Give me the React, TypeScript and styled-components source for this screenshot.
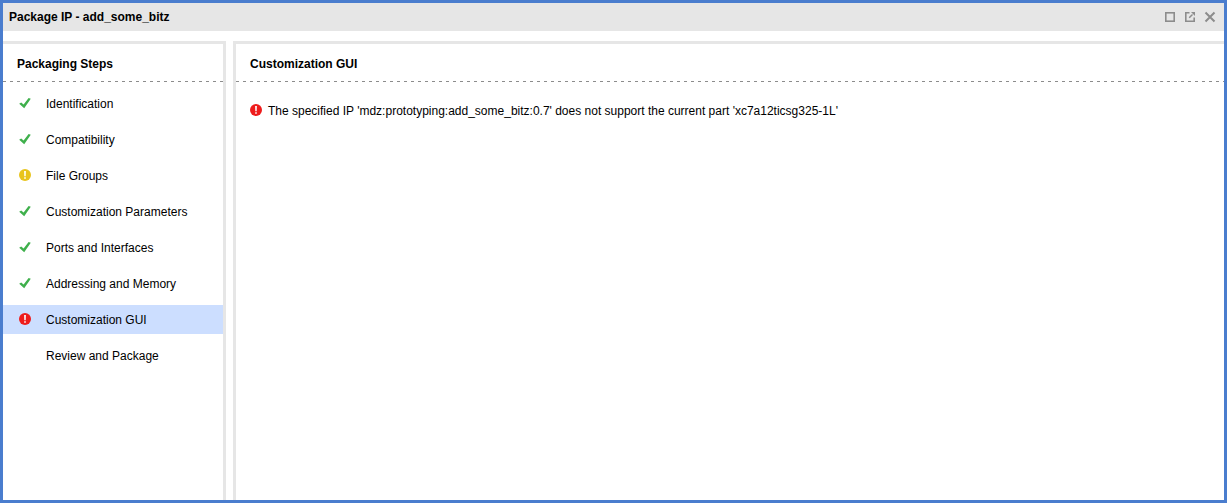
import React from "react";
import styled, { createGlobalStyle } from "styled-components";

const GlobalStyle = createGlobalStyle`
  * { box-sizing: border-box; }
  body {
    margin: 0;
    background: #fff;
    color: #000;
    font: 12px/16px "Liberation Sans", Arial, sans-serif;
  }
`;

const Window = styled.div`
  display: flex;
  flex-direction: column;
  min-height: 100vh;
  border: 3px solid #4a7dce;
`;

const TitleBar = styled.header`
  display: flex;
  align-items: center;
  justify-content: space-between;
  height: 28px;
  padding: 0 8px 0 6px;
  background: #e6e6e6;
`;

const Title = styled.h1`
  margin: 0;
  font-size: 12px;
  font-weight: bold;
`;

const WindowButtons = styled.div`
  display: flex;
  gap: 8px;
`;

const IconButton = styled.button`
  display: flex;
  width: 12px;
  height: 12px;
  padding: 0;
  border: 0;
  background: none;
`;

const Panels = styled.main`
  display: flex;
  flex: 1;
  gap: 7px;
  padding-top: 10px;
`;

const StepsPanel = styled.nav`
  flex: 0 0 223px;
  border: solid #e6e6e6;
  border-width: 3px 3px 0 0;
`;

const ContentPanel = styled.section`
  flex: 1;
  min-width: 0;
  border: solid #e6e6e6;
  border-width: 3px 0 0 3px;
`;

const PanelHeading = styled.h2`
  margin: 0;
  padding: 12px 14px 9px;
  font-size: 12px;
  font-weight: bold;
`;

const DashedRule = styled.div`
  height: 1px;
  background: repeating-linear-gradient(90deg, #8c8c8c 0 3px, transparent 3px 7px);
`;

const StepList = styled.ul`
  display: flex;
  flex-direction: column;
  gap: 7px;
  margin: 0;
  padding: 7px 0;
  list-style: none;
`;

const StepLink = styled.a<{ $selected: boolean }>`
  display: flex;
  align-items: center;
  gap: 15px;
  height: 29px;
  padding: 0 16px;
  background: ${(p) => (p.$selected ? "#ccdeff" : "transparent")};
  color: inherit;
  text-decoration: none;
`;

const StatusSlot = styled.span`
  display: flex;
  flex: 0 0 12px;
  height: 14px;
`;

const Message = styled.p`
  display: flex;
  align-items: center;
  gap: 6px;
  margin: 0;
  padding: 21px 14px;
`;

type Status = "done" | "warning" | "error" | "none";

const StatusIcon = ({ status }: { status: Status }) => {
  if (status === "none") return null;
  if (status === "done")
    return (
      <svg width="12" height="12" viewBox="0 0 12 12" role="img" aria-label="Complete">
        <path d="M0.2 6.8L2.2 5.4L4.6 7.6L9.6 0.9L11.8 1.8L5.2 11.2Z" fill="#3fb04c" />
      </svg>
    );
  return (
    <svg width="12" height="12" viewBox="0 0 12 12" role="img" aria-label={status}>
      <circle cx="6" cy="6" r="6" fill={status === "error" ? "#ee1c1c" : "#e8c41c"} />
      <path
        d="M5 2H7L6.8 7.2H5.2Z M5.1 8.2H6.9V9.8H5.1Z"
        fill={status === "error" ? "#fde0e0" : "#fffbe4"}
      />
    </svg>
  );
};

const steps: { name: string; status: Status }[] = [
  { name: "Identification", status: "done" },
  { name: "Compatibility", status: "done" },
  { name: "File Groups", status: "warning" },
  { name: "Customization Parameters", status: "done" },
  { name: "Ports and Interfaces", status: "done" },
  { name: "Addressing and Memory", status: "done" },
  { name: "Customization GUI", status: "error" },
  { name: "Review and Package", status: "none" },
];

const selectedStep = "Customization GUI";

export default function App() {
  return (
    <>
      <GlobalStyle />
      <Window>
        <TitleBar>
          <Title>Package IP - add_some_bitz</Title>
          <WindowButtons>
            <IconButton aria-label="Maximize">
              <svg width="12" height="12" viewBox="0 0 12 12">
                <rect x="1.8" y="1.8" width="8.4" height="8.4" fill="none" stroke="#8c8c8c" strokeWidth="1.6" />
              </svg>
            </IconButton>
            <IconButton aria-label="Float">
              <svg width="12" height="12" viewBox="0 0 12 12" fill="none" stroke="#8c8c8c">
                <path d="M5.5 1.8H1.8V10.2H10.2V6.5" strokeWidth="1.6" />
                <path d="M5.2 6.8L8.5 3.5" strokeWidth="1.5" />
                <path d="M7 1H11V5Z" fill="#8c8c8c" stroke="none" />
              </svg>
            </IconButton>
            <IconButton aria-label="Close">
              <svg width="12" height="12" viewBox="0 0 12 12">
                <path d="M1.5 1.5L10.5 10.5M10.5 1.5L1.5 10.5" stroke="#8c8c8c" strokeWidth="2" />
              </svg>
            </IconButton>
          </WindowButtons>
        </TitleBar>
        <Panels>
          <StepsPanel aria-label="Packaging Steps">
            <PanelHeading>Packaging Steps</PanelHeading>
            <DashedRule />
            <StepList>
              {steps.map(({ name, status }) => (
                <li key={name}>
                  <StepLink
                    href="#"
                    $selected={name === selectedStep}
                    aria-current={name === selectedStep ? "step" : undefined}
                  >
                    <StatusSlot>
                      <StatusIcon status={status} />
                    </StatusSlot>
                    {name}
                  </StepLink>
                </li>
              ))}
            </StepList>
          </StepsPanel>
          <ContentPanel>
            <PanelHeading>Customization GUI</PanelHeading>
            <DashedRule />
            <Message>
              <StatusSlot>
                <StatusIcon status="error" />
              </StatusSlot>
              The specified IP 'mdz:prototyping:add_some_bitz:0.7' does not support the current part
              'xc7a12ticsg325-1L'
            </Message>
          </ContentPanel>
        </Panels>
      </Window>
    </>
  );
}
